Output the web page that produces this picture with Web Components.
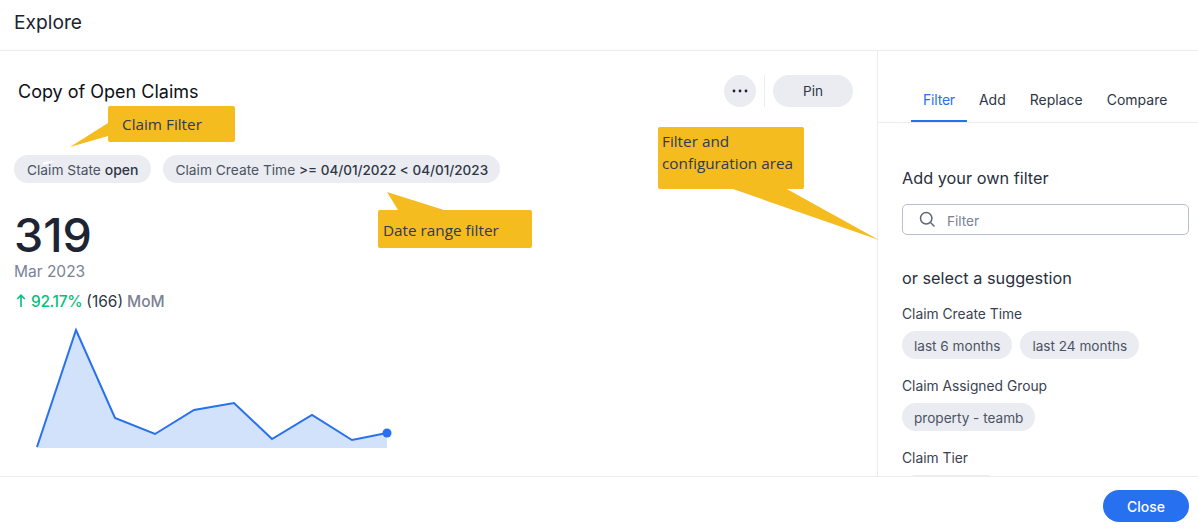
<!DOCTYPE html>
<html><head><meta charset="utf-8"><style>
html,body{margin:0;padding:0;background:#fff}
body{font-family:Inter,"Liberation Sans",sans-serif;color:#1d232f}
</style></head><body>
<x-explore>
  <x-header slot="header">Explore</x-header>
  <x-viz slot="left"></x-viz>
  <x-panel slot="right"></x-panel>
  <x-footer slot="footer"></x-footer>
  <x-callout slot="over" style="left:108px;top:106px;width:127px;height:36px;padding:7px 0 0 14px" tail="-38,41 0,17 0,30" mask="-65,56 -52,55 -65,59">Claim Filter</x-callout>
  <x-callout slot="over" style="left:378px;top:210px;width:154px;height:38px;padding:9px 0 0 5px" tail="9,-18 66,0 20,0" mask="1,-27 6,-27 11,-20">Date range filter</x-callout>
  <x-callout slot="over" style="left:658px;top:127px;width:146px;height:62px;padding:3px 0 0 4px" tail="72,61 127,61 221,113">Filter and<br>configuration area</x-callout>
</x-explore>
<template id="t-explore"><style>
:host{display:grid;grid-template-rows:51px 425px 53px;grid-template-columns:877px 321px;width:1198px;height:529px;position:relative;overflow:hidden}
.h{grid-column:1/3;display:block}.f{grid-column:1/3;display:block}
</style>
<div class="h"><slot name="header"></slot></div>
<slot name="left"></slot><slot name="right"></slot>
<div class="f"><slot name="footer"></slot></div>
<slot name="over"></slot></template>
<template id="t-header"><style>
:host{display:flex;align-items:center;padding:0 0 6px 14px;border-bottom:1px solid #eaecf2;font-size:19.2px;color:#1d232f;box-sizing:border-box;height:51px}
</style><slot></slot></template>
<template id="t-footer"><style>
:host{display:flex;justify-content:flex-end;align-items:flex-start;border-top:1px solid #eaecf2;padding:13px 9px 0 0;box-sizing:border-box;background:#fff;position:relative;height:53px}
button{all:unset;width:86px;height:32px;border-radius:16px;background:#2770ef;color:#fff;font:500 14px/34px Inter,sans-serif;text-align:center}
</style><button>Close</button></template>
<template id="t-pill"><style>
:host{display:inline-flex;align-items:center;height:28px;padding:1px 12px 0;border-radius:14px;background:#eaecf1;font-size:13.75px;color:#4b5364;white-space:nowrap;box-sizing:border-box}
</style><slot></slot></template>
<template id="t-viz"><style>
:host{display:block;box-sizing:border-box;padding:24px 24px 0 14px;overflow:hidden}
.top{display:flex;align-items:center;height:32px}
h2{margin:0 0 0 4px;font-size:18px;font-weight:400;color:#0d1017;flex:1}
.dots{width:32px;height:32px;border-radius:50%;background:#eaecf1;display:flex;align-items:center;justify-content:center}
.sep{width:1px;height:32px;background:#eaecf1;margin:0 8px}
.pin{width:80px;height:32px;border-radius:16px;background:#eaecf1;font-size:13.6px;text-align:center;line-height:32px;color:#2f3646}
.pills{display:flex;gap:12px;margin-top:48px}
.first{padding:1px 13px 0}
b{font-weight:500;color:#2f3646;font-size:14px}
b.dt{font-size:13.5px}
.num{font-size:46.6px;font-weight:500;line-height:56px;margin-top:24px;color:#1d2433;}
.date{font-size:15.5px;line-height:20px;color:#7a8294;margin-top:-1px}
.delta{display:flex;align-items:center;font-size:15.5px;line-height:20px;margin-top:10px;font-weight:500;color:#7a8294;gap:4px}
.delta svg{margin:-3px 1px 0 2px}.g{color:#0bbd7c;letter-spacing:-.35px}.d{color:#2f3646;font-weight:400}
x-spark{margin:13px 0 0 -14px}
</style>
<div class="top"><h2>Copy of Open Claims</h2>
<div class="dots"><svg width="16" height="4" viewBox="0 0 16 4"><circle cx="2" cy="2" r="1.4" fill="#1d232f"/><circle cx="8" cy="2" r="1.4" fill="#1d232f"/><circle cx="14" cy="2" r="1.4" fill="#1d232f"/></svg></div>
<div class="sep"></div><div class="pin">Pin</div></div>
<div class="pills"><x-pill class="first">Claim State&nbsp;<b>open</b></x-pill><x-pill>Claim Create Time&nbsp;<b class="dt">&gt;= 04/01/2022 &lt; 04/01/2023</b></x-pill></div>
<div class="num">319</div><div class="date">Mar 2023</div>
<div class="delta"><svg width="10" height="13" viewBox="0 0 10 13" fill="none" stroke="#0bbd7c" stroke-width="1.6"><path d="M5 13V1.5M1.2 5 5 1.2 8.8 5"/></svg><span class="g">92.17%</span><span class="d">(166)</span><span>MoM</span></div>
<x-spark></x-spark></template>
<template id="t-spark"><style>:host{display:block;width:400px;height:125px}svg{display:block}</style>
<svg width="400" height="125" viewBox="0 325 400 125"><path d="M37 447 76 330 115 418 155 434 194 410 234 403 272 439 312 415 352 440 387 433V448H37Z" fill="#d3e2fb"/><path d="M37 447 76 330 115 418 155 434 194 410 234 403 272 439 312 415 352 440 387 433" fill="none" stroke="#2770ef" stroke-width="2"/><circle cx="387" cy="433" r="4.5" fill="#2770ef"/></svg></template>
<template id="t-panel"><style>
:host{display:block;border-left:1px solid #eaecf2;box-sizing:border-box;overflow:hidden;height:425px;color:#2f3646}
.tabs{display:flex;height:72px;border-bottom:1px solid #eaecf2;padding-left:33px;box-sizing:border-box}
.tab{font-size:14px;padding:27px 12px 0;display:flex;align-items:center;height:71px;box-sizing:border-box;border-bottom:2px solid transparent}
.tab.on{color:#2770ef;border-color:#2770ef;letter-spacing:-.2px}
.body{padding:0 9px 0 24px}
h3{font-size:16.3px;font-weight:400;margin:0;line-height:20px;color:#2a303e}
.search{height:31px;border:1px solid #b9c0cd;border-radius:5px;margin-top:16px;display:flex;align-items:center;padding-left:16px;box-sizing:border-box;color:#7a8294;font-size:13.6px;gap:11px}
.search span{padding-top:2px}
.lab{font-size:13.8px;line-height:18px;color:#3a4151}
.row{display:flex;gap:8px;margin-top:8px}
.row x-pill{font-size:13.6px}
</style>
<div class="tabs"><div class="tab on">Filter</div><div class="tab">Add</div><div class="tab">Replace</div><div class="tab">Compare</div></div>
<div class="body"><h3 style="margin-top:45px">Add your own filter</h3>
<div class="search"><svg width="17" height="17" viewBox="0 0 17 17" fill="none" stroke="#5d6575" stroke-width="1.5"><circle cx="7.2" cy="7.2" r="5.7"/><path d="m11.5 11.5 4 4"/></svg><span>Filter</span></div>
<h3 style="margin-top:33px">or select a suggestion</h3>
<div class="lab" style="margin-top:17px">Claim Create Time</div>
<div class="row"><x-pill>last 6 months</x-pill><x-pill>last 24 months</x-pill></div>
<div class="lab" style="margin-top:18px">Claim Assigned Group</div>
<div class="row"><x-pill>property - teamb</x-pill></div>
<div class="lab" style="margin-top:18px">Claim Tier</div>
<div class="row"><x-pill style="width:98px"></x-pill></div>
</div></template>
<template id="t-callout"><style>
:host{position:absolute;display:block;box-sizing:border-box;background:#f5bc20;border-radius:2px;font:15.3px/22px "Open Sans","DejaVu Sans",sans-serif;color:#2e3a55;white-space:nowrap}
svg{position:absolute;left:0;top:0;overflow:visible;width:1px;height:1px}
</style><svg><polygon class="m" fill="#fff"/><polygon class="t" fill="#f5bc20"/></svg><slot></slot></template>
<script>
function reg(name,tid,extra){customElements.define(name,class extends HTMLElement{
 constructor(){super();this.attachShadow({mode:"open"}).appendChild(document.getElementById(tid).content.cloneNode(true));}
 connectedCallback(){if(extra)extra(this);}
});}
reg("x-explore","t-explore");reg("x-header","t-header");reg("x-footer","t-footer");reg("x-pill","t-pill");
reg("x-spark","t-spark");reg("x-viz","t-viz");reg("x-panel","t-panel");
reg("x-callout","t-callout",e=>{const s=e.shadowRoot;s.querySelector(".t").setAttribute("points",e.getAttribute("tail"));
 if(e.getAttribute("mask"))s.querySelector(".m").setAttribute("points",e.getAttribute("mask"));});
</script>
</body></html>
